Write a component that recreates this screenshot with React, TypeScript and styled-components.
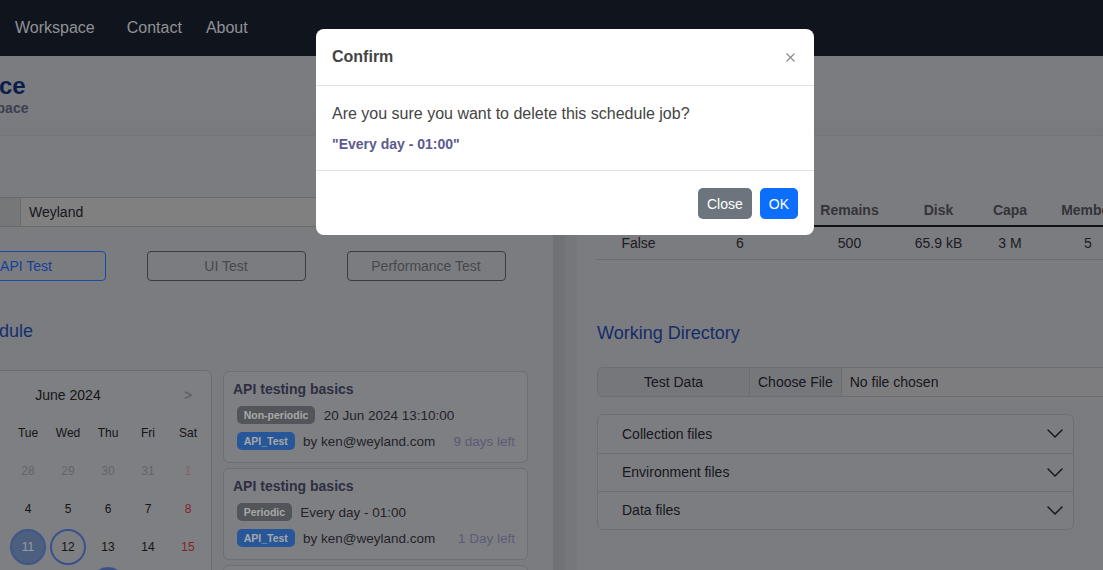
import React from 'react';
import styled, { createGlobalStyle } from 'styled-components';

const GlobalStyle = createGlobalStyle`
  html, body { margin: 0; padding: 0; }
  body {
    font-family: "Liberation Sans", Arial, sans-serif;
    background: #bdbfc5;
    overflow: hidden;
  }
  * { box-sizing: border-box; }
`;

const Shell = styled.div`
  position: relative;
  width: 100vw;
  height: 100vh;
  overflow: hidden;
  background: #bdbfc5;
`;

const Navbar = styled.nav`
  height: 56px;
  background: #1a202b;
  display: flex;
  align-items: center;
  gap: 24px;
  padding-left: 15px;
`;

const NavLink = styled.a<{ $spaced?: boolean }>`
  color: #dadee4;
  font-size: 16px;
  text-decoration: none;
  margin-right: ${(p) => (p.$spaced ? '8px' : '0')};
`;

const Viewport = styled.div`
  width: 100%;
  overflow: hidden;
`;

/* the page is scrolled horizontally by 120px in the reference */
const Canvas = styled.div`
  width: 1297px;
  margin-left: -120px;
`;

const PageHeader = styled.header`
  height: 80px;
  padding: 15px 18px 0;
  border-bottom: 1px solid #b1b2b9;
  background: linear-gradient(#bdbfc5 75%, #b8bac0);
`;

const PageTitle = styled.h1`
  margin: 0;
  font-size: 24px;
  line-height: 29px;
  font-weight: 700;
  color: #122e73;
`;

const PageSubtitle = styled.div`
  font-size: 14px;
  line-height: 17px;
  font-weight: 700;
  color: #59627e;
`;

const Main = styled.main`
  display: flex;
  padding-left: 24px;
  height: calc(100vh - 136px);
`;

const LeftPanel = styled.section`
  flex: 0 0 649px;
  padding: 61px 25px 0 20px;
`;

const Gutter = styled.div`
  flex: 0 0 24px;
  display: flex;
  & > span { flex: 1; background: #aeafb5; }
  & > span + span { background: #b5b7bd; }
`;

const RightPanel = styled.section`
  flex: 0 0 600px;
  padding: 59px 20px 0;
`;

const Inset = styled.div`
  padding: 0 22px;
`;

const InputGroup = styled.div`
  display: flex;
  height: 30px;
  border: 1px solid #a2a3a9;
  border-radius: 4px;
  overflow: hidden;
  font-size: 14px;
`;

const Addon = styled.span`
  flex: 0 0 74px;
  display: flex;
  align-items: center;
  padding-left: 10px;
  background: #b5b7bb;
  border-right: 1px solid #a2a3a9;
  color: #26262e;
`;

const TextInput = styled.input`
  flex: 1;
  border: none;
  outline: none;
  padding: 0 8px;
  background: #c5c5c6;
  color: #26262e;
  font: inherit;
`;

const ButtonRow = styled.div`
  display: flex;
  justify-content: center;
  gap: 41px;
  margin-top: 24px;
`;

const TestButton = styled.button<{ $active?: boolean }>`
  width: 159px;
  height: 30px;
  border-radius: 4px;
  background: transparent;
  font-family: inherit;
  font-size: 14px;
  border: 1px solid ${(p) => (p.$active ? '#2673fe' : '#595c62')};
  color: ${(p) => (p.$active ? '#1f64e7' : '#6c6f75')};
`;

const SectionTitle = styled.h2`
  margin: 39px 0 0 34px;
  font-size: 18px;
  line-height: 22px;
  font-weight: 400;
  color: #224aa9;
`;

const ScheduleRow = styled.div`
  display: flex;
  align-items: flex-start;
  gap: 11px;
  margin-top: 28px;
`;

const CalendarCard = styled.div`
  flex: 0 0 288px;
  padding: 4px 3px 3px;
  border: 1px solid #a6a8ae;
  border-radius: 6px;
  background: #c2c3c9;
`;

const CalHeader = styled.div`
  display: flex;
  align-items: center;
  height: 39px;
  font-size: 14px;
`;

const CalNav = styled.span`
  width: 40px;
  text-align: center;
  color: #8a8a92;
  font-size: 14px;
`;

const MonthTitle = styled.span`
  flex: 1;
  text-align: center;
  color: #262626;
`;

const CalGrid = styled.div`
  display: grid;
  grid-template-columns: repeat(7, 40px);
  grid-auto-rows: 38px;
  font-size: 12px;
`;

const Weekday = styled.span`
  display: flex;
  align-items: center;
  justify-content: center;
  color: #1f1f22;
`;

type DayState = 'selected' | 'today' | 'event' | undefined;

const DayCell = styled.span`
  display: flex;
  align-items: center;
  justify-content: center;
`;

const DayNum = styled.span<{ $color: string; $state: DayState }>`
  width: 36px;
  height: 36px;
  border-radius: 50%;
  display: flex;
  align-items: center;
  justify-content: center;
  border: 2px solid
    ${(p) =>
      p.$state === 'selected' ? '#5f86d0' : p.$state ? '#5a7fd8' : 'transparent'};
  background: ${(p) =>
    p.$state === 'selected' ? '#7592c2' : p.$state === 'event' ? '#5f78b8' : 'transparent'};
  color: ${(p) => (p.$state === 'selected' ? '#e6ecf8' : p.$color)};
`;

const JobList = styled.div`
  flex: 0 0 305px;
  display: flex;
  flex-direction: column;
  gap: 5px;
  margin-top: 1px;
`;

const JobCard = styled.div`
  border: 1px solid #a9aab1;
  border-radius: 6px;
  background: #c2c3c9;
  padding: 8px 12px 8px 9px;
`;

const JobTitle = styled.div`
  font-size: 14px;
  line-height: 18px;
  font-weight: 700;
  color: #464a68;
  margin-bottom: 4px;
`;

const JobRow = styled.div`
  display: flex;
  align-items: center;
  gap: 8.5px;
  height: 26px;
  padding-left: 4px;
  font-size: 13.5px;
  color: #36363e;
`;

const Badge = styled.span<{ $tone: 'gray' | 'blue' }>`
  display: inline-block;
  padding: 3.5px 6.7px;
  border-radius: 5px;
  font-size: 10.5px;
  line-height: 1;
  font-weight: 700;
  color: #ffffff;
  background: ${(p) => (p.$tone === 'blue' ? '#3d84ec' : '#7f8389')};
`;

const Remaining = styled.span`
  margin-left: auto;
  color: #8a8eb4;
`;

const DataTable = styled.table`
  width: 537px;
  border-collapse: collapse;
  table-layout: fixed;
  font-size: 14px;
  color: #2e2e36;

  th {
    height: 31px;
    padding: 0;
    font-weight: 700;
    color: #505056;
    border-bottom: 2px solid #1c1c1f;
    text-align: center;
  }
  td {
    height: 33px;
    padding: 0;
    text-align: center;
    border-bottom: 1px solid #a6a8ae;
  }
`;

const WorkingTitle = styled.h2`
  margin: 62px 0 0;
  font-size: 18px;
  line-height: 22px;
  font-weight: 400;
  color: #1f45a0;
`;

const FileGroup = styled.div`
  display: flex;
  width: 520px;
  height: 30px;
  margin-top: 23px;
  border: 1px solid #a6a8ae;
  border-radius: 6px;
  overflow: hidden;
  font-size: 14px;
  color: #26262e;
`;

const FileAddon = styled.span`
  flex: 0 0 152px;
  display: flex;
  align-items: center;
  justify-content: center;
  background: #b5b7bd;
  border-right: 1px solid #a6a8ae;
`;

const FileButton = styled.span`
  display: flex;
  align-items: center;
  padding: 0 8px;
  background: #b5b7bd;
  border-right: 1px solid #a6a8ae;
`;

const FileName = styled.span`
  flex: 1;
  display: flex;
  align-items: center;
  padding-left: 8px;
  background: #c0c1c5;
`;

const Accordion = styled.div`
  width: 477px;
  margin-top: 17px;
  border: 1px solid #a9aab1;
  border-radius: 6px;
  background: #bfc0c6;
  overflow: hidden;
`;

const AccordionItem = styled.div`
  height: 38px;
  display: flex;
  align-items: center;
  justify-content: space-between;
  padding: 0 10px 0 24px;
  font-size: 14px;
  color: #26262e;
  & + & { border-top: 1px solid #a9aab1; }
`;

const Backdrop = styled.div`
  position: fixed;
  inset: 0;
  background: rgba(0, 0, 0, 0.35);
  z-index: 1050;
`;

const ModalDialog = styled.div`
  position: fixed;
  top: 29px;
  left: 316px;
  width: 498px;
  background: #ffffff;
  border-radius: 8px;
  z-index: 1060;
  color: #444444;
`;

const ModalHeader = styled.div`
  height: 57px;
  display: flex;
  align-items: center;
  justify-content: space-between;
  padding: 0 16px;
  border-bottom: 1px solid #dee2e6;
`;

const ModalTitle = styled.h5`
  margin: 0;
  font-size: 16px;
  line-height: 20px;
  font-weight: 700;
  color: #444444;
`;

const CloseX = styled.button`
  width: 16px;
  height: 16px;
  padding: 0;
  border: none;
  background: transparent;
  display: flex;
  align-items: center;
  justify-content: center;
`;

const ModalBody = styled.div`
  padding: 16px;
`;

const Question = styled.p`
  margin: 0;
  font-size: 16px;
  line-height: 24px;
`;

const Quote = styled.p`
  margin: 8px 0 0;
  font-size: 14px;
  line-height: 20px;
  font-weight: 700;
  color: #5b5b8f;
`;

const ModalFooter = styled.div`
  display: flex;
  justify-content: flex-end;
  gap: 8px;
  padding: 17px 16px 16px;
  border-top: 1px solid #dee2e6;
`;

const ModalButton = styled.button<{ $variant: 'secondary' | 'primary' }>`
  height: 31px;
  padding: 0 9px;
  border: none;
  border-radius: 5px;
  font-family: inherit;
  font-size: 14px;
  color: #ffffff;
  background: ${(p) => (p.$variant === 'primary' ? '#0d6efd' : '#6c757d')};
`;

const Chevron = () => (
  <svg width="16" height="9" viewBox="0 0 16 9" fill="none">
    <path d="M1 1 L8 8 L15 1" stroke="#1e1e24" strokeWidth="1.4" strokeLinecap="round" strokeLinejoin="round" />
  </svg>
);

type Day = { n: number; color: string; state?: DayState };

const buildDays = (): Day[] => {
  const days: Day[] = [];
  const prev = [26, 27, 28, 29, 30, 31];
  prev.forEach((n, i) => days.push({ n, color: i === 0 ? '#d0929a' : '#9a9a9d' }));
  for (let d = 1; d <= 30; d++) {
    const dow = (d + 5) % 7; // June 1 2024 = Saturday
    let color = '#1f1f22';
    if (d === 1) color = '#d0929a';
    else if (dow === 6 || dow === 0) color = '#c83645';
    let state: DayState;
    if (d === 11) state = 'selected';
    else if (d === 12) state = 'today';
    else if (d === 20) state = 'event';
    days.push({ n: d, color, state });
  }
  for (let d = 1; days.length < 42; d++) days.push({ n: d, color: '#9a9a9d' });
  return days;
};

const weekdays = ['Sun', 'Mon', 'Tue', 'Wed', 'Thu', 'Fri', 'Sat'];

const jobs = [
  { kind: 'Non-periodic', when: '20 Jun 2024 13:10:00', left: '9 days left' },
  { kind: 'Periodic', when: 'Every day - 01:00', left: '1 Day left' },
  { kind: 'Periodic', when: 'Every week - 09:30', left: '3 days left' },
];

export default function App() {
  const days = buildDays();
  return (
    <Shell>
      <GlobalStyle />
      <Navbar>
        <NavLink href="#" $spaced>Workspace</NavLink>
        <NavLink href="#">Contact</NavLink>
        <NavLink href="#">About</NavLink>
      </Navbar>
      <Viewport>
        <Canvas>
          <PageHeader>
            <PageTitle>Workspace</PageTitle>
            <PageSubtitle>Primary Workspace</PageSubtitle>
          </PageHeader>
          <Main>
            <LeftPanel>
              <Inset>
                <InputGroup>
                  <Addon>Name</Addon>
                  <TextInput readOnly value="Weyland" />
                </InputGroup>
                <ButtonRow>
                  <TestButton $active>API Test</TestButton>
                  <TestButton>UI Test</TestButton>
                  <TestButton>Performance Test</TestButton>
                </ButtonRow>
              </Inset>
              <SectionTitle>Schedule</SectionTitle>
              <ScheduleRow>
                <CalendarCard>
                  <CalHeader>
                    <CalNav>&lt;</CalNav>
                    <MonthTitle>June 2024</MonthTitle>
                    <CalNav>&gt;</CalNav>
                  </CalHeader>
                  <CalGrid>
                    {weekdays.map((w) => (
                      <Weekday key={w}>{w}</Weekday>
                    ))}
                    {days.map((d, i) => (
                      <DayCell key={i}>
                        <DayNum $color={d.color} $state={d.state}>{d.n}</DayNum>
                      </DayCell>
                    ))}
                  </CalGrid>
                </CalendarCard>
                <JobList>
                  {jobs.map((j, i) => (
                    <JobCard key={i}>
                      <JobTitle>API testing basics</JobTitle>
                      <JobRow>
                        <Badge $tone="gray">{j.kind}</Badge>
                        <span>{j.when}</span>
                      </JobRow>
                      <JobRow>
                        <Badge $tone="blue">API_Test</Badge>
                        <span>by ken@weyland.com</span>
                        <Remaining>{j.left}</Remaining>
                      </JobRow>
                    </JobCard>
                  ))}
                </JobList>
              </ScheduleRow>
            </LeftPanel>
            <Gutter>
              <span />
              <span />
            </Gutter>
            <RightPanel>
              <DataTable>
                <colgroup>
                  <col style={{ width: 83 }} />
                  <col style={{ width: 120 }} />
                  <col style={{ width: 99 }} />
                  <col style={{ width: 79 }} />
                  <col style={{ width: 64 }} />
                  <col style={{ width: 92 }} />
                </colgroup>
                <thead>
                  <tr>
                    <th>Private</th>
                    <th>Jobs</th>
                    <th>Remains</th>
                    <th>Disk</th>
                    <th>Capa</th>
                    <th>Member</th>
                  </tr>
                </thead>
                <tbody>
                  <tr>
                    <td>False</td>
                    <td>6</td>
                    <td>500</td>
                    <td>65.9 kB</td>
                    <td>3 M</td>
                    <td>5</td>
                  </tr>
                </tbody>
              </DataTable>
              <WorkingTitle>Working Directory</WorkingTitle>
              <FileGroup>
                <FileAddon>Test Data</FileAddon>
                <FileButton>Choose File</FileButton>
                <FileName>No file chosen</FileName>
              </FileGroup>
              <Accordion>
                {['Collection files', 'Environment files', 'Data files'].map((t) => (
                  <AccordionItem key={t}>
                    <span>{t}</span>
                    <Chevron />
                  </AccordionItem>
                ))}
              </Accordion>
            </RightPanel>
          </Main>
        </Canvas>
      </Viewport>
      <Backdrop />
      <ModalDialog role="dialog" aria-modal="true">
        <ModalHeader>
          <ModalTitle>Confirm</ModalTitle>
          <CloseX aria-label="Close">
            <svg width="9" height="9" viewBox="0 0 9 9">
              <path d="M0.5 0.5 L8.5 8.5 M8.5 0.5 L0.5 8.5" stroke="#8a8a8a" strokeWidth="1.1" />
            </svg>
          </CloseX>
        </ModalHeader>
        <ModalBody>
          <Question>Are you sure you want to delete this schedule job?</Question>
          <Quote>"Every day - 01:00"</Quote>
        </ModalBody>
        <ModalFooter>
          <ModalButton $variant="secondary">Close</ModalButton>
          <ModalButton $variant="primary">OK</ModalButton>
        </ModalFooter>
      </ModalDialog>
    </Shell>
  );
}
